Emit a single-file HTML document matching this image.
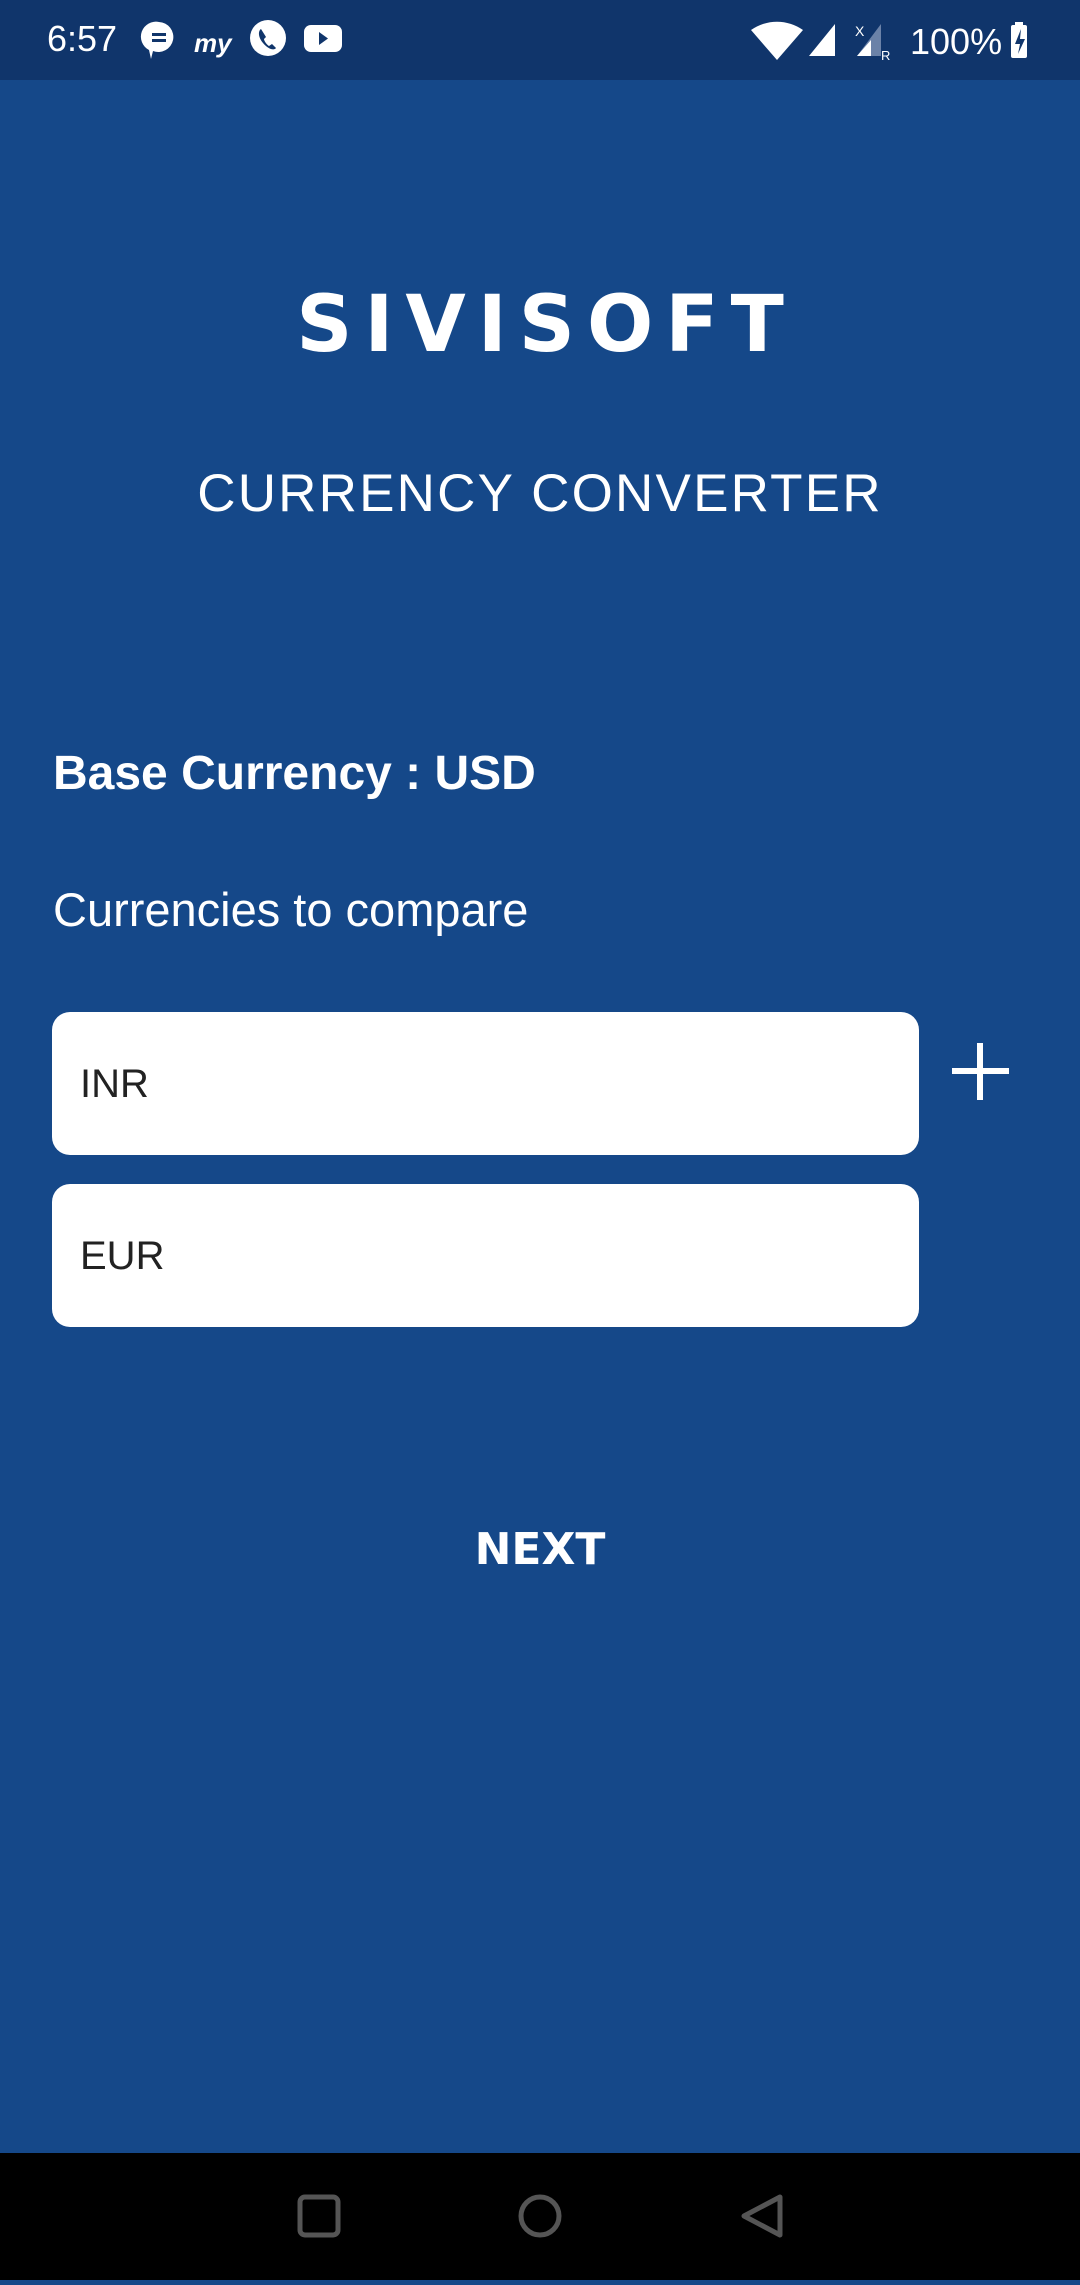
<!DOCTYPE html>
<html><head><meta charset="utf-8"><style>
*{margin:0;padding:0;box-sizing:border-box}
html,body{width:1080px;height:2280px}
body{background:#154889;font-family:"Liberation Sans",sans-serif;color:#fff;position:relative;overflow:hidden}
.sb{position:absolute;left:0;top:0;width:1080px;height:80px;background:#10356b}
.abs{position:absolute;white-space:nowrap}
.box{position:absolute;left:52px;width:867px;height:143px;background:#fff;border-radius:18px}
.box span{position:absolute;left:28px;top:50px;font-size:40px;color:#222}
.nav{position:absolute;left:0;bottom:0;width:1080px;height:127px;background:#000}
</style></head><body>
<div class="sb">
<div class="abs" style="left:47px;top:18px;font-size:36px">6:57</div>
<svg class="abs" style="left:140px;top:20px" width="220" height="42" viewBox="0 0 220 42">
<path d="M19 2a15 15 0 1 1-6 29l-2 8-2-9A15 15 0 0 1 19 2z" fill="#fff"/><rect x="12" y="13" width="14" height="3" fill="#10356b"/><rect x="12" y="19" width="14" height="3" fill="#10356b"/>
<text x="54" y="32" font-size="26" font-weight="bold" font-style="italic" fill="#fff" font-family="Liberation Sans">my</text>
<circle cx="128" cy="18" r="18" fill="#fff"/><path d="M121 9c-3 2-3 8 2 14s11 8 13 5l-4-4-3 2c-2-1-5-5-5-7l2-2z" fill="#10356b"/>
<rect x="164" y="5" width="38" height="27" rx="7" fill="#fff"/><path d="M179 12v13l9-6.5z" fill="#10356b"/>
</svg>
<svg class="abs" style="left:745px;top:20px" width="300" height="42" viewBox="0 0 300 42">
<path d="M6 10a45 45 0 0 1 52 0L32 40z" fill="#fff"/>
<path d="M64 36L90 4v32z" fill="#fff"/>
<path d="M112 36L136 4v32z" fill="#6b82a8"/><path d="M112 36l14-16v16z" fill="#fff"/>
<text x="110" y="16" font-size="14" fill="#fff">X</text><text x="136" y="40" font-size="13" fill="#fff">R</text>
<text x="165" y="34" font-size="36" fill="#fff" font-family="Liberation Sans">100%</text>
<rect x="266" y="5" width="16" height="33" rx="2" fill="#fff"/><rect x="270" y="2" width="8" height="4" fill="#fff"/>
<path d="M276 9l-6 15h5l-2 10 7-15h-5z" fill="#10356b"/>
</svg>
</div>
<div class="abs" style="left:0;width:1080px;text-align:center;top:280px;font-family:'DejaVu Sans',sans-serif;font-weight:bold;font-size:78px;letter-spacing:12px;padding-left:12px">SIVISOFT</div>
<div class="abs" style="left:0;width:1080px;text-align:center;top:463px;font-size:53px;letter-spacing:2.2px">CURRENCY CONVERTER</div>
<div class="abs" style="left:53px;top:746px;font-size:48px;font-weight:bold">Base Currency : USD</div>
<div class="abs" style="left:53px;top:882px;font-size:47px">Currencies to compare</div>
<div class="box" style="top:1012px"><span>INR</span></div>
<div class="box" style="top:1184px"><span>EUR</span></div>
<svg class="abs" style="left:952px;top:1043px" width="57" height="57"><rect x="25" y="0" width="6" height="57" fill="#fff"/><rect x="0" y="25" width="57" height="6" fill="#fff"/></svg>
<div class="abs" style="left:0;width:1080px;text-align:center;top:1524px;font-family:'DejaVu Sans',sans-serif;font-weight:bold;font-size:44px">NEXT</div>
<div class="nav">
<svg width="1080" height="127"><g fill="none" stroke="#555" stroke-width="5">
<rect x="300" y="44" width="38" height="38" rx="5"/>
<ellipse cx="540" cy="63" rx="19" ry="19"/>
<path d="M780 44v38l-36-19z" stroke-linejoin="round"/></g></svg>
</div>
</body></html>
